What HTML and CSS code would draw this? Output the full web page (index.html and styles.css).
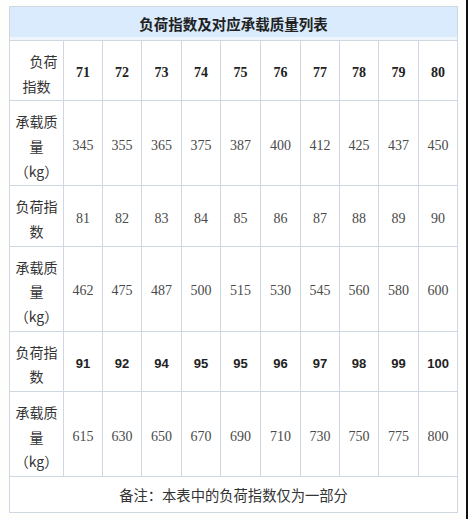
FILE: index.html
```html
<!DOCTYPE html>
<html lang="zh">
<head>
<meta charset="utf-8">
<title>负荷指数及对应承载质量列表</title>
<link rel="stylesheet" href="styles.css">
</head>
<body>
<div class="page">
  <table class="load-table">
    <colgroup>
      <col class="c-label">
      <col class="c39"><col class="c39"><col class="c40"><col class="c39"><col class="c40">
      <col class="c40"><col class="c39"><col class="c39"><col class="c40"><col class="c39">
    </colgroup>
    <tr class="title-row"><td colspan="11">负荷指数及对应承载质量列表</td></tr>
    <tr class="r2">
      <td class="label">　负荷<br>指数</td>
      <td class="b-serif">71</td><td class="b-serif">72</td><td class="b-serif">73</td><td class="b-serif">74</td><td class="b-serif">75</td>
      <td class="b-serif">76</td><td class="b-serif">77</td><td class="b-serif">78</td><td class="b-serif">79</td><td class="b-serif">80</td>
    </tr>
    <tr class="r3">
      <td class="label">承载质<br>量<br>（kg）</td>
      <td>345</td><td>355</td><td>365</td><td>375</td><td>387</td><td>400</td><td>412</td><td>425</td><td>437</td><td>450</td>
    </tr>
    <tr class="r2">
      <td class="label">负荷指<br>数</td>
      <td>81</td><td>82</td><td>83</td><td>84</td><td>85</td><td>86</td><td>87</td><td>88</td><td>89</td><td>90</td>
    </tr>
    <tr class="r3">
      <td class="label">承载质<br>量<br>（kg）</td>
      <td>462</td><td>475</td><td>487</td><td>500</td><td>515</td><td>530</td><td>545</td><td>560</td><td>580</td><td>600</td>
    </tr>
    <tr class="r2">
      <td class="label">负荷指<br>数</td>
      <td class="b-sans">91</td><td class="b-sans">92</td><td class="b-sans">94</td><td class="b-sans">95</td><td class="b-sans">95</td>
      <td class="b-sans">96</td><td class="b-sans">97</td><td class="b-sans">98</td><td class="b-sans">99</td><td class="b-sans">100</td>
    </tr>
    <tr class="r3">
      <td class="label">承载质<br>量<br>（kg）</td>
      <td>615</td><td>630</td><td>650</td><td>670</td><td>690</td><td>710</td><td>730</td><td>750</td><td>775</td><td>800</td>
    </tr>
    <tr class="note-row"><td colspan="11">备注：本表中的负荷指数仅为一部分</td></tr>
  </table>
  <div class="edge"></div>
</div>
</body>
</html>
```
FILE: styles.css
```css
html, body {
  margin: 0;
  padding: 0;
  background: #fefefc;
  overflow: hidden;
}
.page {
  display: flex;
  justify-content: space-between;
  align-items: flex-start;
  height: 519px;
  padding: 6px 0 0 9px;
  box-sizing: border-box;
}
.edge {
  width: 2px;
  height: 519px;
  margin-top: -6px;
  background: #111;
}
.load-table {
  border-collapse: collapse;
  table-layout: fixed;
  width: 449px;
  background: #fff;
  font-family: "Liberation Serif", "Noto Sans CJK SC", serif;
  font-size: 14px;
  color: #4a4a4a;
  text-spacing-trim: space-all;
}
.c-label { width: 54px; }
.c39 { width: 39px; }
.c40 { width: 40px; }
.load-table td {
  border: 1px solid #cfd8e2;
  text-align: center;
  vertical-align: middle;
  line-height: 24.67px;
  padding: 8px 0 2px;
  white-space: nowrap;
}
.title-row td {
  background: #d9ebfc;
  box-shadow: inset 0 -3px 0 #eef5fc;
  font-family: "Noto Sans CJK SC", sans-serif;
  font-weight: bold;
  font-size: 14.5px;
  color: #222;
  line-height: 24px;
  padding: 5px 0 4px;
}
.load-table td.label {
  font-family: "Noto Sans CJK SC", sans-serif;
  font-size: 14px;
  color: #333;
  padding-left: 0;
  padding-right: 0;
}
.b-serif {
  font-weight: bold;
  color: #222;
}
.b-sans {
  font-family: "Liberation Sans", sans-serif;
  font-weight: bold;
  font-size: 13px;
  color: #222;
}
.note-row td {
  font-family: "Noto Sans CJK SC", sans-serif;
  font-size: 14.3px;
  color: #333;
  line-height: 24px;
  padding: 6px 0 5px;
}
```
